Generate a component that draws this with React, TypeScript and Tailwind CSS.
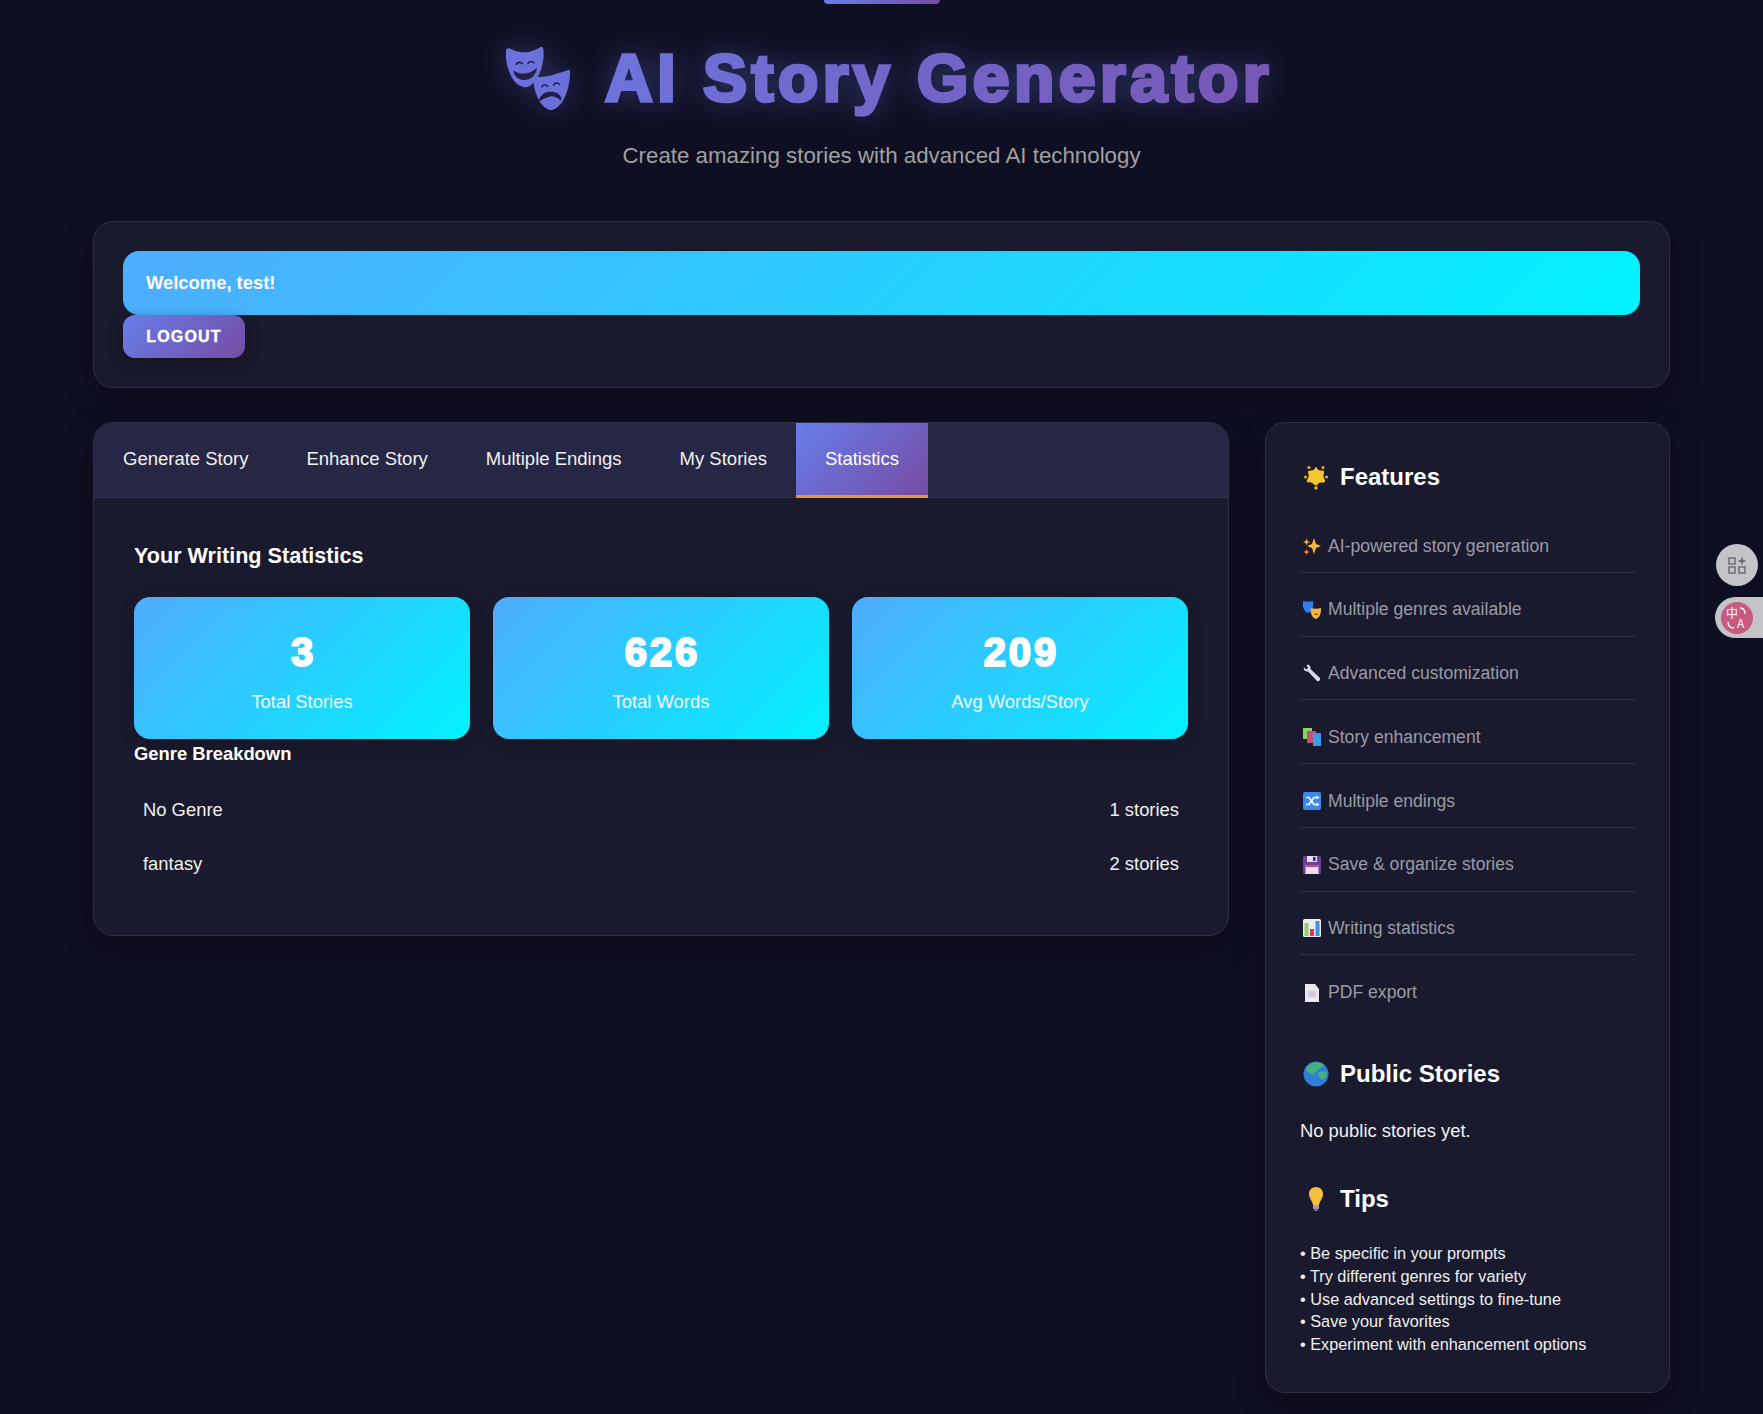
import type { ReactNode } from "react"

const sans = "font-['Liberation_Sans',Arial,sans-serif]"

const blueGradient = "bg-[linear-gradient(135deg,#4facfe_0%,#00f2fe_100%)]"
const purpleGradient = "bg-[linear-gradient(135deg,#667eea_0%,#764ba2_100%)]"

// the title fades from blue-violet to purple letter by letter
const title = "AI Story Generator"
const letterColor = (i: number) => {
    const t = i / (title.length - 1)
    const r = Math.round(0x6e + (0x78 - 0x6e) * t)
    const g = Math.round(0x72 + (0x58 - 0x72) * t)
    const b = Math.round(0xda + (0xb6 - 0xda) * t)
    return `rgb(${r},${g},${b})`
}

const MasksIcon = ({ className }: { className?: string }) => (
    <svg viewBox="14 14 66 66" className={className}>
        <path fill="currentColor" fillRule="evenodd" d="M15 18 C16 16 18 16 20 17 C26 20 32 21 38 20 C43 19 47 17 50 15 C52 14 53 16 53 18 C54 26 52 37 48 44 C45 50 40 55 36 56 C31 56 26 53 23 49 C17 41 14 28 15 18 Z M24.500 33 C25.500 29 30.500 29 32.500 32 L31.500 33 C30 30.800 27 30.800 25.800 33.500 Z M36.500 32 C37.500 28 42.500 28 44.500 31 L43.500 32 C42 29.800 39 29.800 37.800 32.500 Z M22.500 38.500 C29 44 39 43 46.500 36 C46 43 40 49 33 48.500 C27 48 23 44 22.500 38.500 Z"/>
        <path fill="currentColor" fillRule="evenodd" d="M43 45 C50 46 58 45 64 43 C69 41 74 40 79 38 C80 38 80 40 80 41 C80 52 77 63 72 71 C68 76 64 79 60 79 C55 78 50 73 47 66 C44 59 42 52 43 45 Z M50.500 56 C51.500 52 56.500 52 58.500 55 L57.500 56 C56 53.800 53 53.800 51.800 56.500 Z M62.500 54 C63.500 50 68.500 50 70.500 53 L69.500 54 C68 51.800 65 51.800 63.800 54.500 Z M48.500 71 C48.500 65.500 53 61 59 60.500 C65 60 70.500 62.500 71.500 68 L70 69 C66 65.500 63 64.500 59 65.500 C54 66.500 51 68.500 48.500 71 Z"/>
    </svg>
)

const StarEmoji = () => (
    <svg viewBox="0 0 26 26" className="h-[26px] w-[26px]">
        <circle cx="2.500" cy="13" r="1.600" fill="#e8a92a"/>
        <circle cx="23.500" cy="13" r="1.600" fill="#e8a92a"/>
        <circle cx="13" cy="24" r="1.800" fill="#e8a92a"/>
        <circle cx="6" cy="3.500" r="1.600" fill="#e8a92a"/>
        <circle cx="20" cy="3.500" r="1.600" fill="#e8a92a"/>
        <path fill="#f5c52f" d="M13 2.500 C14 5 16 7 19 6.500 C21 6.300 21.500 7.500 21 9 C20 12 20.500 14 22 16 C22.500 18 21 19 19 18.500 C16.500 18 15 19.500 13.500 21.500 C12.500 22 11.500 21 10.500 20 C9 18.500 7 18 5 18.500 C3.500 18 3.500 16.500 4.500 15 C6 13 6 11 5 8.500 C4.800 7 6 6.200 7.500 6.500 C10 7 12 5 13 2.500 Z"/>
    </svg>
)

const GlobeEmoji = () => (
    <svg viewBox="0 0 26 26" className="h-[26px] w-[26px]">
        <circle cx="13" cy="13" r="12.500" fill="#2f7fd8"/>
        <path fill="#48b07e" d="M5 5 C9 1 17 0 21 4 C20 7 16 7 15 9 C13 11 11 11 10 14 C8 13 5 11 3 10 C3 8 4 6 5 5 Z"/>
        <path fill="#48b07e" d="M15 12 C18 10 22 10 24 12 C24 15 22 18 19 19 C17 17 15 15 15 12 Z"/>
    </svg>
)

const BulbEmoji = () => (
    <svg viewBox="0 0 26 26" className="h-[26px] w-[26px]">
        <path fill="#f6bf3a" d="M13 1 C18 1 20.500 5 20 9 C19.500 13 16.500 15 16 19 L10 19 C9.500 15 6.500 13 6 9 C5.500 5 8 1 13 1 Z"/>
        <rect x="10" y="19" width="6" height="4" rx="1" fill="#a89ab0"/>
        <rect x="11" y="23" width="4" height="2" rx="1" fill="#7d7088"/>
    </svg>
)

const Sparkles = () => (
    <svg viewBox="0 0 18 18">
        <path fill="#f7b43c" d="M11 1 L13 7 L18 9 L13 11 L11 17 L9 11 L4 9 L9 7 Z"/>
        <path fill="#f9a63a" d="M3.500 1.500 L4.500 4 L7 5 L4.500 6 L3.500 8.500 L2.500 6 L0 5 L2.500 4 Z"/>
        <path fill="#f28a3c" d="M3.500 12 L4.300 14 L6.500 15 L4.300 16 L3.500 18 L2.700 16 L0.500 15 L2.700 14 Z"/>
    </svg>
)

const SmallMasks = () => (
    <svg viewBox="0 0 18 18">
        <path fill="#2f80ed" d="M0 0 C3 1 7 1 10 0 C11 6 9 11 5 12 C1 11 -1 6 0 0 Z"/>
        <path fill="#f2b544" d="M8 7 C11 8 15 8 18 7 C18.500 13 16 17 13 18 C9 17 7 12 8 7 Z"/>
        <path fill="#7a4d1e" d="M10.500 14 C12 12 14 12 15.500 14 Z"/>
    </svg>
)

const Wrench = () => (
    <svg viewBox="0 0 18 18">
        <path fill="#d8d8e0" d="M1 3 L3 5.500 L5 4 L3.500 1 C6 0 8 2 7.500 5 L17 14 C18 15.500 16 18 14 17 L5 7.500 C2.500 8 0 6 1 3 Z"/>
    </svg>
)

const Books = () => (
    <svg viewBox="0 0 18 18">
        <rect x="0" y="0" width="9" height="11" fill="#8bd35c"/>
        <rect x="4" y="3" width="9" height="12" fill="#c2527a"/>
        <rect x="10" y="5" width="8" height="13" fill="#3a9be8"/>
    </svg>
)

const Shuffle = () => (
    <svg viewBox="0 0 18 18">
        <rect width="18" height="18" rx="2" fill="#3b88ee"/>
        <path fill="none" stroke="#fff" strokeWidth="1.600" d="M3 5.500 H6 L11 12.500 H14 M3 12.500 H6 L11 5.500 H14"/>
        <path fill="#fff" d="M13.500 3.500 L16.500 5.500 L13.500 7.500 Z M13.500 10.500 L16.500 12.500 L13.500 14.500 Z"/>
    </svg>
)

const Floppy = () => (
    <svg viewBox="0 0 18 18">
        <rect width="18" height="18" rx="1.500" fill="#6b3f97"/>
        <rect x="4" y="0" width="10" height="6" fill="#e4dcee"/>
        <rect x="10" y="1" width="2.500" height="4" fill="#3a2458"/>
        <rect x="2.500" y="9" width="13" height="9" fill="#e9dff0"/>
        <rect x="2.500" y="9" width="13" height="2" fill="#d9466e"/>
    </svg>
)

const Chart = () => (
    <svg viewBox="0 0 18 18">
        <rect width="18" height="18" rx="1.500" fill="#ecebf0"/>
        <rect x="1.500" y="4" width="4" height="13" fill="#8ed364"/>
        <rect x="7" y="10" width="4" height="7" fill="#e0345f"/>
        <rect x="12.500" y="2" width="4" height="15" fill="#3c92e8"/>
    </svg>
)

const Page = () => (
    <svg viewBox="0 0 18 18">
        <path fill="#ece8f0" d="M2 0 H12 L16 5 V18 H2 Z"/>
        <rect x="5" y="7" width="8" height="6" fill="#d4cde0"/>
    </svg>
)

const features: { icon: ReactNode; label: string }[] = [
    { icon: <Sparkles/>, label: "AI-powered story generation" },
    { icon: <SmallMasks/>, label: "Multiple genres available" },
    { icon: <Wrench/>, label: "Advanced customization" },
    { icon: <Books/>, label: "Story enhancement" },
    { icon: <Shuffle/>, label: "Multiple endings" },
    { icon: <Floppy/>, label: "Save & organize stories" },
    { icon: <Chart/>, label: "Writing statistics" },
    { icon: <Page/>, label: "PDF export" },
]

const tabs = ["Generate Story", "Enhance Story", "Multiple Endings", "My Stories", "Statistics"]

const stats = [
    { value: "3", label: "Total Stories" },
    { value: "626", label: "Total Words" },
    { value: "209", label: "Avg Words/Story" },
]

const genres = [
    { name: "No Genre", count: "1 stories" },
    { name: "fantasy", count: "2 stories" },
]

const tips = [
    "Be specific in your prompts",
    "Try different genres for variety",
    "Use advanced settings to fine-tune",
    "Save your favorites",
    "Experiment with enhancement options",
]

const SideHeading = ({ icon, children }: { icon: ReactNode; children: ReactNode }) => (
    <h3 className="flex items-center gap-[11px] pl-[3px] text-[24px] leading-[38px] font-bold text-white">
        {icon}
        {children}
    </h3>
)

export default function App() {
    return (
        <div className={`relative min-h-[1414px] overflow-hidden bg-[#0f0f23] text-white ${sans}`}>
            <div className={`mx-auto h-1 w-[116px] rounded-b-sm ${purpleGradient}`}/>

            <header className="pt-[36px] text-center">
                <h1 className="mx-auto flex w-fit items-center gap-[35px] pl-[15px] text-[66px] leading-[76px] font-bold tracking-[4.5px] drop-shadow-[0_0_14px_rgba(102,126,234,0.35)] [-webkit-text-stroke-width:3.5px]">
                    <MasksIcon className="h-[65px] w-[65px] text-[#6c70da]"/>
                    <span className="whitespace-pre">
                        {title.split("").map((letter, i) => (
                            <span key={i} style={{color: letterColor(i), WebkitTextStrokeColor: letterColor(i)}}>{letter}</span>
                        ))}
                    </span>
                </h1>
                <p className="mt-[22px] text-[22.3px] leading-[36px] text-[#a0a0a0]">
                    Create amazing stories with advanced AI technology
                </p>
            </header>

            <main className="px-[93px] pt-[47px]">
                <section className="rounded-[20px] border border-[#2f3042] bg-[#1a1a2e] p-[29px] shadow-[0_10px_30px_rgba(0,0,0,0.3)]">
                    <div className={`rounded-[16px] ${blueGradient} px-[23px] py-5 text-[18.4px] leading-6 font-bold`}>
                        Welcome, test!
                    </div>
                    <button className={`block h-[43px] w-[122px] rounded-[12px] ${purpleGradient} text-[16px] font-bold tracking-[1.2px] shadow-[0_4px_15px_rgba(0,0,0,0.3)] [-webkit-text-stroke:0.4px_white]`}>
                        LOGOUT
                    </button>
                </section>

                <div className="mt-[34px] flex items-start gap-[36px]">
                    <section className="w-[1136px] overflow-hidden rounded-[20px] border border-[#2f3042] bg-[#1a1a2e] shadow-[0_10px_30px_rgba(0,0,0,0.3)]">
                        <nav className="flex h-[75px] border-b border-[#33344c] bg-[#262745]">
                            {tabs.map(tab => (
                                <div
                                    key={tab}
                                    className={tab === "Statistics"
                                        ? `-mb-px flex items-center border-b-[3px] border-[#e59a3a] ${purpleGradient} px-[29px] text-[18.5px]`
                                        : "-mb-px flex items-center border-b-[3px] border-transparent px-[29px] text-[18.5px] text-[#f0f0f0]"}
                                >
                                    {tab}
                                </div>
                            ))}
                        </nav>
                        <div className="px-10 pt-[41px] pb-[44px]">
                            <h2 className="text-[21.6px] leading-[33px] font-bold">Your Writing Statistics</h2>
                            <div className="mt-[25px] grid grid-cols-3 gap-[23px]">
                                {stats.map(stat => (
                                    <div key={stat.label} className={`flex h-[142px] flex-col items-center rounded-[16px] ${blueGradient} pt-[31px] shadow-[0_4px_15px_rgba(0,0,0,0.2)]`}>
                                        <div className="pl-[3px] text-[40px] leading-[48px] font-bold tracking-[3px] [-webkit-text-stroke:2px_white]">{stat.value}</div>
                                        <div className="mt-[12px] text-[18.4px] leading-[28px] text-[#f4fbff]">{stat.label}</div>
                                    </div>
                                ))}
                            </div>
                            <h3 className="mt-[1px] text-[18.4px] leading-[28px] font-bold">Genre Breakdown</h3>
                            <div className="mt-[15px]">
                                {genres.map(genre => (
                                    <div key={genre.name} className="flex h-[54px] items-center justify-between px-[9px] text-[18.4px] text-[#f0f0f0]">
                                        <span>{genre.name}</span>
                                        <span>{genre.count}</span>
                                    </div>
                                ))}
                            </div>
                        </div>
                    </section>

                    <aside className="w-[405px] rounded-[20px] border border-[#2f3042] bg-[#1a1a2e] px-[34px] pt-[35px] pb-[36px] shadow-[0_10px_30px_rgba(0,0,0,0.3)]">
                        <SideHeading icon={<StarEmoji/>}>Features</SideHeading>
                        <ul className="mt-[13px]">
                            {features.map((feature, i) => (
                                <li
                                    key={feature.label}
                                    className={`flex h-[63.75px] items-center gap-[7px] pt-[11px] pl-[3px] text-[17.6px] text-[#9a9aa6] ${i < features.length - 1 ? "border-b border-[#33344c]" : ""}`}
                                >
                                    <span className="h-[18px] w-[18px] shrink-0">{feature.icon}</span>
                                    {feature.label}
                                </li>
                            ))}
                        </ul>
                        <div className="mt-[36px]">
                            <SideHeading icon={<GlobeEmoji/>}>Public Stories</SideHeading>
                        </div>
                        <p className="mt-[23px] text-[18.4px] leading-[29px] text-[#f0f0f0]">No public stories yet.</p>
                        <div className="mt-[35px]">
                            <SideHeading icon={<BulbEmoji/>}>Tips</SideHeading>
                        </div>
                        <ul className="mt-[24px] text-[16.3px] leading-[22.8px] text-[#f0f0f0]">
                            {tips.map(tip => <li key={tip}>• {tip}</li>)}
                        </ul>
                    </aside>
                </div>
            </main>

            {/* browser extension buttons */}
            <div className="absolute top-[544px] left-[1716px] flex h-[42px] w-[42px] items-center justify-center rounded-full bg-[#c4c4c8]">
                <svg viewBox="0 0 20 20" className="h-5 w-5" fill="none" stroke="#6b6b72" strokeWidth="1.500">
                    <rect x="2" y="3" width="6" height="6"/>
                    <rect x="2" y="12" width="6" height="6"/>
                    <rect x="12" y="12" width="6" height="6"/>
                    <path fill="#6b6b72" stroke="none" d="M15 1.500 L16.200 4.800 L19.500 6 L16.200 7.200 L15 10.500 L13.800 7.200 L10.500 6 L13.800 4.800 Z"/>
                </svg>
            </div>
            <div className="absolute top-[597px] left-[1715px] flex h-[41px] w-[48px] items-center rounded-l-full bg-[#c4c4c8] pl-[6px]">
                <div className="relative h-8 w-8 rounded-full bg-[#c95a80] font-['Noto_Sans_CJK_SC',sans-serif] text-white">
                    <span className="absolute top-[5px] left-[5px] text-[12px] leading-3">中</span>
                    <span className="absolute top-[15px] left-[16px] text-[12px] leading-3">A</span>
                    <svg viewBox="0 0 32 32" className="absolute inset-0 h-8 w-8" fill="none" stroke="#fff" strokeWidth="1.300">
                        <path d="M19 6 C22 6 24 8 24 12"/>
                        <path d="M7 20 C7 24 9 26 13 26"/>
                    </svg>
                </div>
            </div>
        </div>
    )
}
